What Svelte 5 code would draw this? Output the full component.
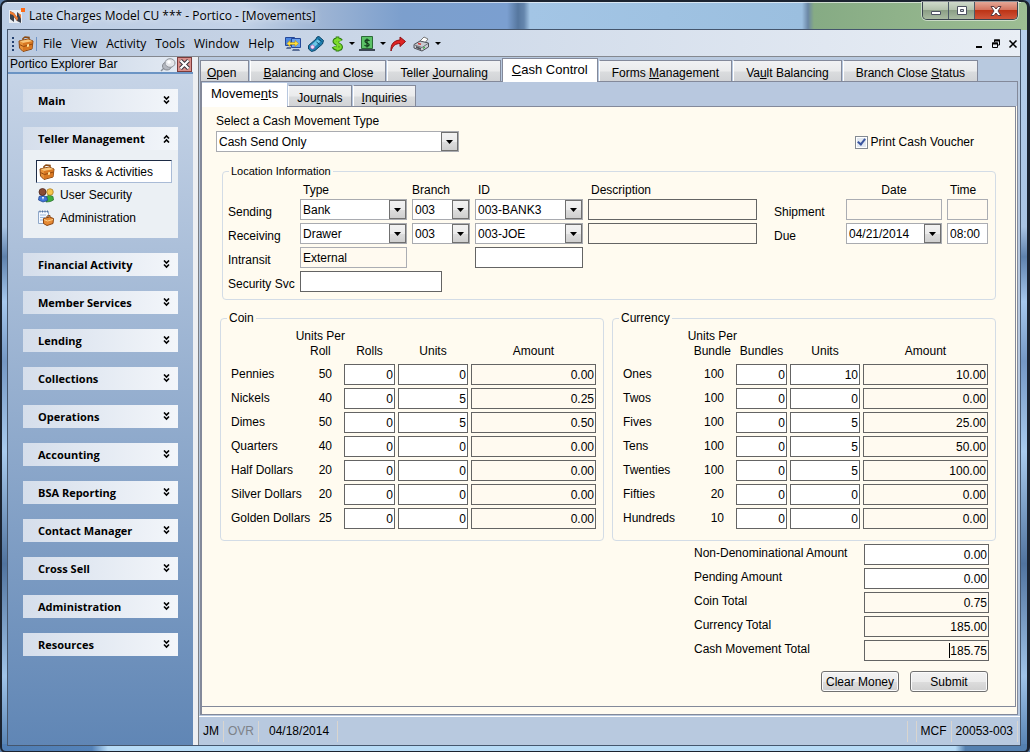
<script lang="ts">
  type Row = { name: string; per: number; packs: string; units: string; amount: string };

  const menus = ['File', 'View', 'Activity', 'Tools', 'Window', 'Help'];

  const groups = [
    'Main', 'Teller Management', 'Financial Activity', 'Member Services', 'Lending', 'Collections',
    'Operations', 'Accounting', 'BSA Reporting', 'Contact Manager', 'Cross Sell', 'Administration', 'Resources'
  ];
  const tasks = ['Tasks & Activities', 'User Security', 'Administration'];

  // [before, access key, after]
  const mainTabs = [
    ['', 'O', 'pen'],
    ['', 'B', 'alancing and Close'],
    ['Teller ', 'J', 'ournaling'],
    ['', 'C', 'ash Control'],
    ['Forms ', 'M', 'anagement'],
    ['Va', 'u', 'lt Balancing'],
    ['Branch Close ', 'S', 'tatus']
  ];
  const subTabs = [
    ['Moveme', 'n', 'ts'],
    ['Jou', 'r', 'nals'],
    ['', 'I', 'nquiries']
  ];

  let openGroup = $state('Teller Management');
  let activeMain = $state(3);
  let activeSub = $state(0);
  let activeTask = $state(0);
  let printVoucher = $state(true);

  let coins: Row[] = $state([
    { name: 'Pennies', per: 50, packs: '0', units: '0', amount: '0.00' },
    { name: 'Nickels', per: 40, packs: '0', units: '5', amount: '0.25' },
    { name: 'Dimes', per: 50, packs: '0', units: '5', amount: '0.50' },
    { name: 'Quarters', per: 40, packs: '0', units: '0', amount: '0.00' },
    { name: 'Half Dollars', per: 20, packs: '0', units: '0', amount: '0.00' },
    { name: 'Silver Dollars', per: 20, packs: '0', units: '0', amount: '0.00' },
    { name: 'Golden Dollars', per: 25, packs: '0', units: '0', amount: '0.00' }
  ]);

  let bills: Row[] = $state([
    { name: 'Ones', per: 100, packs: '0', units: '10', amount: '10.00' },
    { name: 'Twos', per: 100, packs: '0', units: '0', amount: '0.00' },
    { name: 'Fives', per: 100, packs: '0', units: '5', amount: '25.00' },
    { name: 'Tens', per: 100, packs: '0', units: '5', amount: '50.00' },
    { name: 'Twenties', per: 100, packs: '0', units: '5', amount: '100.00' },
    { name: 'Fifties', per: 20, packs: '0', units: '0', amount: '0.00' },
    { name: 'Hundreds', per: 10, packs: '0', units: '0', amount: '0.00' }
  ]);

  let totals = $state([
    { id: 'nonDenom', label: 'Non-Denominational Amount', value: '0.00', locked: false },
    { id: 'pending', label: 'Pending Amount', value: '0.00', locked: false },
    { id: 'coinTotal', label: 'Coin Total', value: '0.75', locked: true },
    { id: 'currencyTotal', label: 'Currency Total', value: '185.00', locked: true },
    { id: 'moveTotal', label: 'Cash Movement Total', value: '185.75', locked: true }
  ]);

  function clearMoney() {
    for (const row of [...coins, ...bills]) {
      row.packs = '0';
      row.units = '0';
      row.amount = '0.00';
    }
    for (const total of totals) total.value = '0.00';
  }
</script>

{#snippet combo(id: string, label: string, value: string)}
  <span class="combo">
    <select {id} aria-label={label}>
      <option>{value}</option>
    </select>
    <span class="drop">
      <svg width="7" height="4" viewBox="0 0 7 4"><path d="M0 0h7L3.500 4z" /></svg>
    </span>
  </span>
{/snippet}

{#snippet briefcase()}
  <svg width="16" height="16" viewBox="0 0 16 16">
    <path d="M5 5V2.500L7 1l4 .5V4" fill="none" stroke="#8a4a12" stroke-width="1.500" />
    <path d="M1 5l9-2 5 2-1 8-9 2.500L1.500 12z" fill="#e8933a" stroke="#8a4510" />
    <path d="M1.500 5l9-1.500 4 1.500-9 2z" fill="#f8c67c" />
    <path d="M5 7v8l9-2.500.5-7z" fill="#d87822" />
    <path d="M1.500 8.500l4 2L14.500 8" fill="none" stroke="#94480e" />
    <path d="M9 8.500l2-.5v2.500l-2 .5z" fill="#ffe39a" />
  </svg>
{/snippet}

{#snippet money(caption: string, per: string, packs: string, rows: Row[])}
  <fieldset class="money">
    <legend>{caption}</legend>
    <table>
      <thead>
        <tr>
          <th colspan="2" class="per-head"><span>Units Per<br />{per}</span></th>
          <th class="packs">{packs}</th>
          <th class="units">Units</th>
          <th class="amount">Amount</th>
        </tr>
      </thead>
      <tbody>
        {#each rows as row}
          <tr>
            <td class="name"><div>{row.name}</div></td>
            <td class="per">{row.per}</td>
            <td><input class="num" aria-label="{row.name} {packs}" bind:value={row.packs} /></td>
            <td><input class="num" aria-label="{row.name} units" bind:value={row.units} /></td>
            <td><input class="num locked" aria-label="{row.name} amount" value={row.amount} readonly /></td>
          </tr>
        {/each}
      </tbody>
    </table>
  </fieldset>
{/snippet}

<div class="window">
  <header class="titlebar">
    <svg class="logo" width="16" height="16" viewBox="0 0 16 16">
      <path d="M0 2h13v13H0z" fill="#e9edf2" />
      <path d="M1 3l4 2 3 5V4l4 3v8l-4-2-3-4v5l-4-3z" fill="#39404c" />
      <path d="M1 3l4 2 4 5-1 3-4-6-3-1zM9 5l3 2v4z" fill="#f07c30" />
      <path d="M12 0h4v4h-4z" fill="#ff6a13" />
    </svg>
    <span class="caption">Late Charges Model CU *** - Portico - [Movements]</span>
    <div class="controls">
      <button class="min" aria-label="Minimize">
        <svg width="12" height="12" viewBox="0 0 12 12"><path d="M1.500 6.500h9v3h-9z" fill="#fff" stroke="#4d5260" /></svg>
      </button>
      <button class="max" aria-label="Restore">
        <svg width="12" height="12" viewBox="0 0 12 12">
          <path d="M1.500 1.500h9v8h-9z" fill="#fff" stroke="#4d5260" />
          <path d="M4.500 4.500h3v2h-3z" fill="#c6cdd8" stroke="#4d5260" />
        </svg>
      </button>
      <button class="close" aria-label="Close">
        <svg width="12" height="12" viewBox="0 0 12 12">
          <path d="M1 1.500h3l2 2.500 2-2.500h3L8 6l3 4.500H8L6 8l-2 2.500H1L4 6z" fill="#fff" stroke="#5b3a40" />
        </svg>
      </button>
    </div>
  </header>

  <div class="client">
    <nav class="toolbar">
      <svg class="grip" width="3" height="16" viewBox="0 0 3 16">
        <path d="M0 1h2v2H0zM0 5h2v2H0zM0 9h2v2H0zM0 13h2v2H0z" fill="#23406f" />
      </svg>
      {@render briefcase()}
      <span class="divider"></span>
      {#each menus as menu}
        <button class="menu">{menu}</button>
      {/each}
      <div class="tools">
        <button class="tool" aria-label="Workstations">
          <svg width="16" height="16" viewBox="0 0 16 16">
            <path d="M.5 1.500h9v8h-9z" fill="#4c86e0" stroke="#24489a" />
            <path d="M6.500 2.500h9v9h-9z" fill="#6aa2ee" stroke="#24489a" />
            <path d="M2 11h4v2H1zM8 13h6l1 2H7z" fill="#5a6f98" />
            <path d="M2 7.500L5 4.500v2h5v-2l3.500 3-3.500 3v-2H5v2z" fill="#ffe23c" stroke="#b78a10" stroke-width=".6" />
          </svg>
        </button>
        <button class="tool" aria-label="Tag">
          <svg width="16" height="16" viewBox="0 0 16 16">
            <path d="M.5 9.500L8 3l1-2 2-.5 4.500 4L14.500 8 7 14.500 3.500 15.500.5 13z" fill="#1d7fb0" stroke="#0c4468" />
            <path d="M2 10l7.500-6.500 3 2L5.500 12z" fill="#6cc6e6" />
            <circle cx="4.500" cy="11" r="2" fill="#f4dff6" stroke="#a04aa8" stroke-width=".6" />
            <path d="M8.500 6l3 2.500M10.500 3l3 2.500" stroke="#0c4468" />
          </svg>
        </button>
        <button class="tool" aria-label="Cash">
          <svg width="13" height="16" viewBox="0 0 14 16">
            <path d="M7 0v16M11 4.500C10 2.500 4 2 3.500 5S11.500 8 11 11.500 4 14 2.500 11" fill="none" stroke="#2c7a10" stroke-width="3.800" />
            <path d="M7 1v14M10.500 4.500C9 3 4.500 2.800 4 5S11 8 10.500 11.300 4.500 13 3.300 11" fill="none" stroke="#7edb2c" stroke-width="2.400" />
          </svg>
          <span class="caret"></span>
        </button>
        <button class="tool" aria-label="Bill">
          <svg width="16" height="16" viewBox="0 0 16 16">
            <path d="M2.500 .5h11v12h-11z" fill="#5cc267" stroke="#2c6b38" />
            <path d="M0 13h16v2H0z" fill="#3d4754" />
            <path d="M8 2.500v9M10.500 5C9.500 3.500 6 3.500 6 5.200S10.200 7 10.200 8.800 6.500 10.500 5.500 9" fill="none" stroke="#10371a" stroke-width="1.200" />
          </svg>
          <span class="caret"></span>
        </button>
        <button class="tool" aria-label="Forward">
          <svg width="16" height="16" viewBox="0 0 16 16">
            <path d="M1 15C.5 8 4 4.500 10 4V1l5.500 4.500L10 10.500V7.500C5.500 7.500 2.500 10 1 15z" fill="#e02424" stroke="#8e0e10" />
          </svg>
        </button>
        <button class="tool" aria-label="Print">
          <svg width="17" height="16" viewBox="0 0 17 16">
            <path d="M6 6l5-5 4 2-4 5z" fill="#fff" stroke="#777" />
            <path d="M1 8.500l6-3.500 8.500 2v4L9 15l-8-3z" fill="#c9ccd2" stroke="#4c4f57" />
            <path d="M1.500 9L9 11.500l6-4" fill="none" stroke="#6f737c" />
            <path d="M3 10l5 2v2l-5-2z" fill="#4f525a" />
            <path d="M10 11.500l2-1v1.500l-2 1z" fill="#40b04a" />
            <path d="M5 7.500l3 .8" stroke="#d23838" stroke-width="1.500" />
          </svg>
          <span class="caret"></span>
        </button>
      </div>
      <div class="mdi">
        <button aria-label="Minimize form">
          <svg width="10" height="10" viewBox="0 0 10 10"><path d="M2 7h6v2H2z" /></svg>
        </button>
        <button aria-label="Restore form">
          <svg width="10" height="10" viewBox="0 0 10 10">
            <path d="M3.500 3V1h5v5H7M1.500 4h5v4.500h-5z" fill="none" stroke="#000" />
            <path d="M3 .5h6v2H3zM1 3.500h6v2H1z" />
          </svg>
        </button>
        <button aria-label="Close form">
          <svg width="10" height="10" viewBox="0 0 10 10"><path d="M1.500 1.500l7 7M8.500 1.500l-7 7" stroke="#000" stroke-width="1.600" /></svg>
        </button>
      </div>
    </nav>

    <div class="body">
      <aside class="explorer">
        <div class="explorer-head">
          <span>Portico Explorer Bar</span>
          <button class="pin" aria-label="Pin">
            <svg width="16" height="14" viewBox="0 0 16 14">
              <path d="M1 13l4-4" stroke="#8a8f98" stroke-width="1.500" />
              <ellipse cx="7" cy="8" rx="4.500" ry="4" fill="#b4b8c0" stroke="#85898f" />
              <ellipse cx="10" cy="5" rx="5" ry="4.300" fill="#e4e6ea" stroke="#90949b" />
              <circle cx="9" cy="4" r="1.800" fill="#fff" />
            </svg>
          </button>
          <button class="shut" aria-label="Close explorer bar">
            <svg width="13" height="13" viewBox="0 0 13 13">
              <path d="M2.500 2.500l8 8M10.500 2.500l-8 8" stroke="#34303a" stroke-width="4" />
              <path d="M2.500 2.500l8 8M10.500 2.500l-8 8" stroke="#fff" stroke-width="2.200" />
            </svg>
          </button>
        </div>
        <div class="groups">
          {#each groups as group}
            <section>
              <button class="group" onclick={() => (openGroup = group)}>
                {group}
                <svg class:up={group === openGroup} width="7" height="9" viewBox="0 0 7 9">
                  <path d="M1 .5l2.500 2.500L6 .5M1 4.500L3.500 7 6 4.500" fill="none" stroke="#000" stroke-width="1.600" />
                </svg>
              </button>
              {#if group === openGroup}
                <div class="items">
                  {#each tasks as task, i}
                    <button class="item" class:selected={i === activeTask} onclick={() => (activeTask = i)}>
                      {#if i === 0}
                        {@render briefcase()}
                      {:else if i === 1}
                        <svg width="16" height="16" viewBox="0 0 16 16">
                          <path d="M8 15V10l3-2 4 1.500.5 3.500-3 1.500z" fill="#3fae3f" stroke="#226c26" stroke-width=".7" />
                          <circle cx="12" cy="5" r="3.300" fill="#f6c64c" stroke="#a5731b" stroke-width=".7" />
                          <path d="M.5 13l.5-3.500 4-1 4 1.500.5 3.500-4.500 1.500z" fill="#3f76d8" stroke="#1d3f8a" stroke-width=".7" />
                          <circle cx="4.500" cy="5" r="3.500" fill="#8a4b34" stroke="#3f1d14" stroke-width=".7" />
                          <path d="M4 10l1 3 1-3z" fill="#fff" />
                        </svg>
                      {:else}
                        <svg width="16" height="16" viewBox="0 0 16 16">
                          <path d="M.5 1.500h10v12h-10z" fill="#f3f8ff" stroke="#8fa8c9" />
                          <path d="M2 5h6M2 7.500h5M2 10h4" stroke="#9cb8dc" />
                          <path d="M2 .5v2M4.500 .5v2M7 .5v2M9.500 .5v2" stroke="#5573a0" />
                          <path d="M5.500 8.500l6-1.500 4 1.500-.5 5-6 2-3.500-2z" fill="#e68a34" stroke="#8a4510" />
                          <path d="M9 7.500V6l3-.5V7" fill="none" stroke="#8a4510" />
                          <path d="M6 9.500l3.500 1.500 5.500-1.500" fill="none" stroke="#fbd08c" />
                        </svg>
                      {/if}
                      {task}
                    </button>
                  {/each}
                </div>
              {/if}
            </section>
          {/each}
        </div>
      </aside>

      <main>
        <div class="pages">
          <div class="tabs">
            {#each mainTabs as [before, key, after], i}
              <button class="tab" class:active={i === activeMain} onclick={() => (activeMain = i)}>{before}<u>{key}</u>{after}</button>
            {/each}
          </div>
          <div class="page">
            <div class="tabs sub">
              {#each subTabs as [before, key, after], i}
                <button class="tab" class:active={i === activeSub} onclick={() => (activeSub = i)}>{before}<u>{key}</u>{after}</button>
              {/each}
            </div>

            <form class="panel" onsubmit={(e) => e.preventDefault()}>
              <div class="top">
                <div class="movement">
                  <label for="movementType">Select a Cash Movement Type</label>
                  {@render combo('movementType', 'Cash movement type', 'Cash Send Only')}
                </div>
                <label class="voucher">
                  <input type="checkbox" bind:checked={printVoucher} />
                  Print Cash Voucher
                </label>
              </div>

              <fieldset class="location">
                <legend>Location Information</legend>
                <div class="grid">
                  <span></span>
                  <span class="head">Type</span>
                  <span class="head flush">Branch</span>
                  <span class="head">ID</span>
                  <span class="head">Description</span>
                  <span></span>
                  <span class="head center">Date</span>
                  <span class="head">Time</span>

                  <label class="side" for="sendType">Sending</label>
                  {@render combo('sendType', 'Sending type', 'Bank')}
                  {@render combo('sendBranch', 'Sending branch', '003')}
                  {@render combo('sendId', 'Sending ID', '003-BANK3')}
                  <input class="locked" aria-label="Sending description" readonly />
                  <label class="side when" for="shipDate">Shipment</label>
                  <input id="shipDate" class="locked pale" readonly />
                  <input class="locked pale" aria-label="Shipment time" readonly />

                  <label class="side" for="recvType">Receiving</label>
                  {@render combo('recvType', 'Receiving type', 'Drawer')}
                  {@render combo('recvBranch', 'Receiving branch', '003')}
                  {@render combo('recvId', 'Receiving ID', '003-JOE')}
                  <input class="locked" aria-label="Receiving description" readonly />
                  <label class="side when" for="dueDate">Due</label>
                  {@render combo('dueDate', 'Due date', '04/21/2014')}
                  <input class="pale" aria-label="Due time" value="08:00" />

                  <label class="side" for="intransit">Intransit</label>
                  <input id="intransit" class="locked pale" value="External" readonly />
                  <span></span>
                  <input class="line" aria-label="Intransit ID" />

                  <label class="side first" for="security">Security Svc</label>
                  <input id="security" class="wide" />
                </div>
              </fieldset>

              <div class="cash">
                {@render money('Coin', 'Roll', 'Rolls', coins)}
                {@render money('Currency', 'Bundle', 'Bundles', bills)}
              </div>

              <div class="totals">
                {#each totals as total}
                  <label for={total.id}>{total.label}</label>
                  <span class="field" class:caret-on={total.id === 'moveTotal'}>
                    <input id={total.id} class="num" class:locked={total.locked} readonly={total.locked} bind:value={total.value} />
                  </span>
                {/each}
              </div>

              <div class="actions">
                <button type="button" onclick={clearMoney}>Clear Money</button>
                <button type="submit">Submit</button>
              </div>
            </form>
          </div>
        </div>

        <footer class="status">
          <span>JM</span>
          <span class="off">OVR</span>
          <span class="date">04/18/2014</span>
          <span class="fill"></span>
          <span class="blank"></span>
          <span>MCF</span>
          <span>20053-003</span>
        </footer>
      </main>
    </div>
  </div>
</div>

<style>
  :global(body) {
    background: #5d7ea8;
  }

  .window,
  button,
  input,
  select {
    font-family: 'Liberation Sans', Arial, sans-serif;
    font-size: 12px;
    line-height: 15px;
    color: #000;
  }

  .window {
    box-sizing: border-box;
    min-height: 100vh;
    display: flex;
    flex-direction: column;
    padding: 0 6px 5px 5px;
    border: solid #1b2330;
    border-width: 2px 3px 2px 2px;
    border-radius: 7px 7px 6px 6px;
    background:
      linear-gradient(90deg, #4f7db3 0, #5482b8 90px, #b7dbf6 106px, #b7dbf6 93%, #5480b0 94%) bottom / 100% 7px no-repeat,
      linear-gradient(90deg, #bccde4 0, #c3d2e7 240px, #9db4d4 320px, #7c9fcd 400px, #7b9fd0 505px, #56779f 516px, #6586ad 522px, #a3c5e5 528px, #9bbfdf 800px, #6b87a5 806px, #86ab84 812px, #9dbd93 100%) top / 100% 28px no-repeat,
      linear-gradient(180deg, #b9d2ee 0, #a9c4e4 30%, #5f82ad 34%, #a6c8ee 40%, #7598c4 48%, #a9cbee 60%, #51749f 75%, #a0c3e8 90%, #537fb0 100%);
  }

  button {
    padding: 0;
    border: 0;
    background: none;
    white-space: nowrap;
  }

  svg {
    flex: none;
    display: block;
  }

  .titlebar {
    height: 27px;
    display: flex;
    align-items: center;
    gap: 4px;
    padding-left: 2px;
    box-shadow: inset 0 1px rgba(255, 255, 255, 0.6);
  }

  .caption {
    flex: 1;
    font-family: 'Open Sans', 'Segoe UI', sans-serif;
    text-shadow: 0 0 6px #fff;
  }

  .controls {
    align-self: flex-start;
    display: flex;
    margin-right: 3px;
    border: 1px solid #39434f;
    border-top: 0;
    border-radius: 0 0 5px 5px;
    overflow: hidden;
    box-shadow: 0 0 0 1px rgba(255, 255, 255, 0.5);
  }

  .controls button {
    display: flex;
    align-items: center;
    justify-content: center;
    width: 26px;
    height: 17px;
    border-right: 1px solid #4c5967;
    background: linear-gradient(#cfdacb 0, #b3c2ad 45%, #8c9f86 50%, #a9baa1 100%);
  }

  .controls .close {
    width: 42px;
    border-right: 0;
    background: linear-gradient(#e4a796 0, #d37560 45%, #bd3416 50%, #d0553a 100%);
  }

  .client {
    flex: 1;
    display: flex;
    flex-direction: column;
    border: 1px solid #45566d;
    background: #b8c9df;
  }

  .toolbar {
    height: 27px;
    display: flex;
    align-items: center;
    padding: 1px 2px 0 4px;
    box-sizing: border-box;
    border-bottom: 1px solid #84888f;
    background: linear-gradient(90deg, #bacae0, #e9eef5);
  }

  .grip {
    margin-right: 3px;
  }

  .divider {
    width: 1px;
    height: 14px;
    margin: 0 1px 0 2px;
    background: #6d93c6;
  }

  .menu {
    padding: 0 4px 0 5px;
    font-family: 'Open Sans', 'Segoe UI', sans-serif;
  }

  .tools {
    display: flex;
    gap: 7px;
    padding-left: 7px;
  }

  .tool {
    display: flex;
    align-items: center;
    gap: 5px;
  }

  .caret {
    margin-right: -3px;
    border: 3px solid transparent;
    border-top-color: #000;
    border-bottom: 0;
  }

  .mdi {
    display: flex;
    gap: 7px;
    margin-left: auto;
  }

  .body {
    flex: 1;
    display: flex;
  }

  .explorer {
    flex: none;
    width: 185px;
    border-right: 5px solid #edeff2;
    background: linear-gradient(#c9d6e8, #6086b5);
  }

  .explorer-head {
    display: flex;
    align-items: center;
    height: 15px;
    padding-left: 2px;
    border-bottom: 2px solid #6b94c4;
    background: linear-gradient(90deg, #bdcde2, #e6ecf4);
  }

  .explorer-head span {
    flex: 1;
  }

  .shut {
    margin: 0 1px;
    border: 1px solid #7c3b3b;
    background: #d98f8a;
  }

  .groups {
    display: flex;
    flex-direction: column;
    gap: 15px;
    padding: 15px;
  }

  .group {
    display: flex;
    justify-content: space-between;
    align-items: center;
    width: 100%;
    height: 23px;
    padding: 0 8px 0 15px;
    background: linear-gradient(90deg, #d5deeb, #f3f6fa);
    font-family: 'Open Sans', Tahoma, sans-serif;
    font-size: 11px;
    font-weight: 700;
  }

  .group .up {
    transform: rotate(180deg);
  }

  .items {
    padding: 10px 6px 9px 13px;
    background: #ebf0f4;
  }

  .item {
    display: flex;
    align-items: center;
    gap: 6px;
    width: 100%;
    height: 23px;
    padding: 1px 2px 0;
    box-sizing: border-box;
  }

  .item.selected {
    border: 1px solid #a9bbd6;
    border-top-color: #1d2b45;
    border-left-color: #1d2b45;
    background: #fff;
  }

  main {
    flex: 1;
    min-width: 0;
    display: flex;
    flex-direction: column;
    border-left: 1px solid #7b7f86;
  }

  .pages {
    flex: 1;
    display: flex;
    flex-direction: column;
    padding: 0 2px 1px 1px;
  }

  .tabs {
    display: flex;
    align-items: flex-end;
    gap: 1px;
    height: 24px;
  }

  .tab {
    position: relative;
    height: 21px;
    padding: 4px 12px 0;
    border: 1px solid #83899a;
    border-bottom: 0;
    border-left-color: #fff;
    background: linear-gradient(#f1f2f4 0, #eaebec 50%, #dadcde 55%, #d1d3d6 100%);
  }

  .tab:first-child {
    padding-left: 6px;
    border-left-color: #83899a;
  }

  .tab.active {
    height: 24px;
    margin-bottom: -1px;
    padding: 0 9px 3px;
    border-left-color: #83899a;
    background: #fff;
    font-size: 13px;
  }

  .page {
    flex: 1;
    display: flex;
    flex-direction: column;
    padding: 0 1px 7px 0;
    border: 1px solid #83899a;
    border-left-width: 2px;
    background: linear-gradient(#b8c8df 0, #b8c8df 24px, #fffbf0 24px);
  }

  .sub .tab {
    padding: 4px 8px 0;
  }

  .sub .tab.active {
    padding: 0 8px 5px;
    border-color: #fff;
  }

  .panel {
    flex: 1;
    padding: 7px 19px 14px 14px;
    border: 1px solid #83899a;
    border-left: 0;
    background: #fffbf0;
  }

  .top {
    display: flex;
    justify-content: space-between;
    align-items: flex-end;
    padding-right: 22px;
  }

  .movement {
    width: 243px;
    display: grid;
    gap: 2px;
  }

  .voucher {
    display: flex;
    align-items: center;
    gap: 3px;
    padding-bottom: 2px;
  }

  .voucher input {
    appearance: none;
    width: 13px;
    height: 13px;
    margin: 0;
    border: 1px solid #848a92;
    background: #e3e9f1;
    box-shadow: inset 0 0 0 1px #fff;
  }

  .voucher input:checked::after {
    content: '';
    display: block;
    width: 3px;
    height: 6px;
    margin: 0 0 0 3px;
    border: solid #3a559f;
    border-width: 0 2px 2px 0;
    transform: rotate(38deg);
  }

  fieldset {
    margin: 0;
    padding: 0 4px 8px 7px;
    min-width: 0;
    border: 1px solid #d3dce6;
    border-radius: 4px;
  }

  legend {
    padding: 0 2px;
  }

  .location {
    margin: 12px 0 11px 6px;
    padding: 4px 7px 7px 5px;
  }

  .location legend {
    font-size: 11px;
    margin-left: 1px;
  }

  .grid {
    display: grid;
    grid-template-columns: 67px 107px 58px 108px 1fr 79px 96px 41px;
    column-gap: 5px;
    row-gap: 3px;
  }

  .head {
    height: 13px;
    padding-left: 3px;
  }

  .flush {
    padding-left: 0;
  }

  .center {
    padding-left: 0;
    text-align: center;
  }

  .side {
    padding-top: 6px;
  }

  .first {
    grid-column: 1;
  }

  .when {
    padding-left: 12px;
  }

  .wide {
    grid-column: 2 / 4;
    max-width: 142px;
  }

  input:not([type='checkbox']),
  select {
    width: 100%;
    height: 21px;
    margin: 0;
    padding: 1px 2px 0;
    box-sizing: border-box;
    border: 1px solid #646464;
    border-radius: 0;
    background: #fff;
    outline: 0;
  }

  select {
    appearance: none;
    border-color: #a9abb0;
  }

  input.locked:not([type='checkbox']) {
    background: #fffaf0;
  }

  input.pale:not([type='checkbox']) {
    border-color: #abadb3;
  }

  input.num:not([type='checkbox']) {
    padding: 0 1px;
    text-align: right;
  }

  .combo {
    position: relative;
    display: block;
    height: 21px;
    min-width: 0;
  }

  .drop {
    position: absolute;
    top: 1px;
    right: 1px;
    bottom: 1px;
    width: 15px;
    display: flex;
    align-items: center;
    justify-content: center;
    border: 1px solid #707070;
    background: linear-gradient(#f2f2f2 0, #ebebeb 50%, #dddddd 52%, #cfcfcf 100%);
    pointer-events: none;
  }

  .cash {
    display: grid;
    grid-template-columns: 1fr 1fr;
    gap: 8px;
    margin-left: 4px;
  }

  .money legend {
    margin-left: -1px;
  }

  table {
    width: 100%;
    table-layout: fixed;
    border-spacing: 3px;
  }

  th,
  td {
    padding: 0;
    font-weight: 400;
  }

  th {
    height: 32px;
    padding-bottom: 2px;
    box-sizing: border-box;
    vertical-align: bottom;
    white-space: nowrap;
  }

  .per-head {
    width: 110px;
    text-align: right;
  }

  .per-head span {
    display: inline-block;
    margin-right: -4px;
    text-align: center;
  }

  .packs {
    width: 51px;
  }

  .units {
    width: 70px;
  }

  .name div {
    width: 77px;
    white-space: nowrap;
  }

  .per {
    padding-right: 9px;
    text-align: right;
  }

  td input {
    display: block;
  }

  .totals {
    display: grid;
    grid-template-columns: 165px 125px;
    justify-content: end;
    gap: 3px 5px;
    padding: 3px 7px 0 0;
  }

  .totals label {
    padding-top: 2px;
  }

  .field {
    position: relative;
    height: 21px;
  }

  /* text cursor in front of the grand total */
  .caret-on::before {
    content: '';
    position: absolute;
    top: 3px;
    right: 39px;
    width: 1px;
    height: 15px;
    background: #000;
  }

  .actions {
    display: flex;
    justify-content: flex-end;
    gap: 11px;
    padding: 10px 8px 0 0;
  }

  .actions button {
    width: 78px;
    height: 21px;
    padding-top: 2px;
    border: 1px solid #707070;
    border-radius: 3px;
    background: linear-gradient(#f2f2f2 0, #ebebeb 50%, #dddddd 52%, #cfcfcf 100%);
    box-shadow: inset 0 0 0 1px #fbfbfb;
  }

  .status {
    display: flex;
    align-items: center;
    height: 26px;
    padding: 1px 2px 1px 0;
    border-top: 1px solid #fff;
    background: #b8c9df;
  }

  .status span {
    height: 21px;
    padding: 0 4px;
    border-right: 1px solid #d9d5cf;
    line-height: 21px;
  }

  .status .off {
    color: #7d8289;
  }

  .status .date {
    padding: 0 8px 0 10px;
  }

  .status .fill {
    flex: 1;
  }
</style>
